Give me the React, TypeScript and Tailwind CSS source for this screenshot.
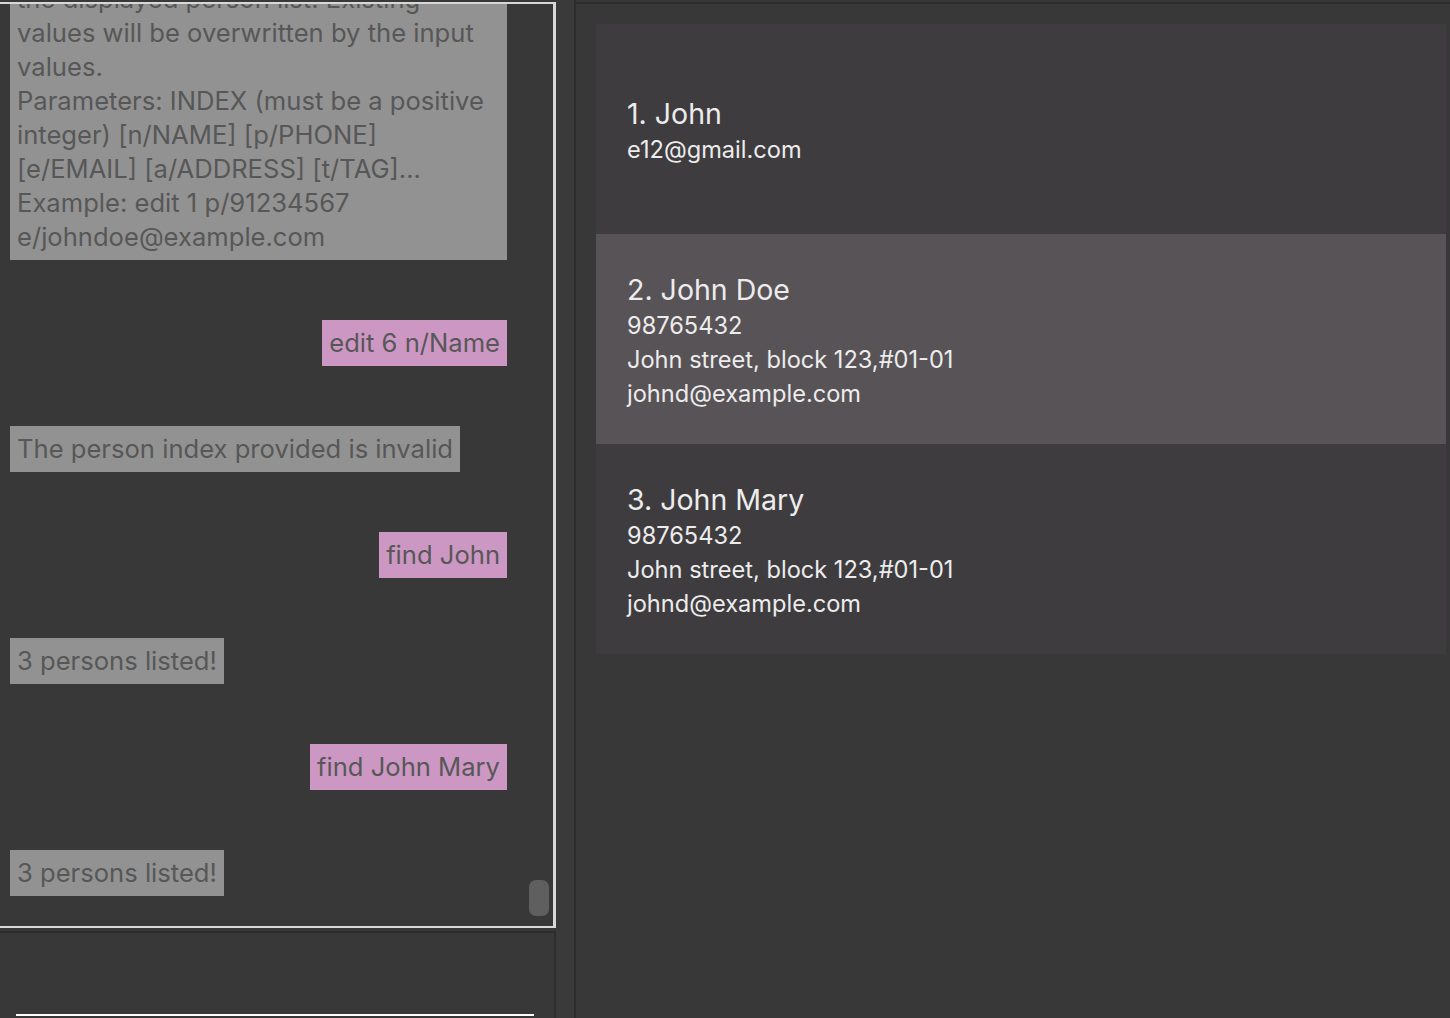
const bubbleText = "text-[#575757] text-[25.6px] leading-[34px]";

interface Message {
    lines: string[];
    fromUser: boolean;
    wide?: boolean;
}

const messages: Message[] = [
    {
        fromUser: false,
        wide: true,
        lines: [
            "edit: Edits the details of the person",
            "identified by the index number used in",
            "the displayed person list. Existing",
            "values will be overwritten by the input",
            "values.",
            "Parameters: INDEX (must be a positive",
            "integer) [n/NAME] [p/PHONE]",
            "[e/EMAIL] [a/ADDRESS] [t/TAG]...",
            "Example: edit 1 p/91234567",
            "e/johndoe@example.com",
        ],
    },
    { fromUser: true, lines: ["edit 6 n/Name"] },
    { fromUser: false, lines: ["The person index provided is invalid"] },
    { fromUser: true, lines: ["find John"] },
    { fromUser: false, lines: ["3 persons listed!"] },
    { fromUser: true, lines: ["find John Mary"] },
    { fromUser: false, lines: ["3 persons listed!"] },
];

interface Person {
    name: string;
    details: string[];
    selected?: boolean;
}

const persons: Person[] = [
    { name: "1. John", details: ["e12@gmail.com"] },
    {
        name: "2. John Doe",
        details: ["98765432", "John street, block 123,#01-01", "johnd@example.com"],
        selected: true,
    },
    {
        name: "3. John Mary",
        details: ["98765432", "John street, block 123,#01-01", "johnd@example.com"],
    },
];

function Bubble({ message }: { message: Message }) {
    return (
        <div className={message.fromUser ? "flex justify-end" : "flex justify-start"}>
            <div
                className={`px-[7px] py-[6px] whitespace-nowrap overflow-hidden ${bubbleText} ${
                    message.fromUser ? "bg-[#cc98c3]" : "bg-[#929292]"
                } ${message.wide ? "w-full" : ""}`}
            >
                {message.lines.map((line, i) => (
                    <div key={i}>{line}</div>
                ))}
            </div>
        </div>
    );
}

function PersonCard({ person }: { person: Person }) {
    return (
        <div
            className={`h-[210px] flex flex-col justify-center pl-[31px] pt-[3px] text-[#ececec] ${
                person.selected ? "bg-[#585357]" : "bg-[#3e3c3f]"
            }`}
        >
            <div className="text-[28.5px] leading-[38px]">{person.name}</div>
            {person.details.map((d, i) => (
                <div key={i} className="text-[23.6px] leading-[34px]">
                    {d}
                </div>
            ))}
        </div>
    );
}

export default function App() {
    return (
        <div
            className="flex w-[1450px] h-[1018px] overflow-hidden bg-[#383838]"
            style={{ fontFamily: "Inter, 'Noto Sans', sans-serif" }}
        >
            {/* chat column */}
            <div className="w-[556px] flex flex-col pt-[2px]">
                <div className="relative h-[926px] overflow-hidden border-t-2 border-r-[3px] border-b-2 border-[#d8d8d8] flex flex-col justify-end gap-[60px] pl-[10px] pr-[46px] pb-[30px]">
                    {messages.map((m, i) => (
                        <Bubble key={i} message={m} />
                    ))}
                    <div className="absolute right-[4px] bottom-[10px] w-[20px] h-[36px] rounded-[7px] bg-[#5f5f5f]" />
                </div>
                <div className="mt-[3px] h-[2px] bg-[#2d2d2d]" />
                <div className="flex-1 flex flex-col justify-end pl-[16px] pr-[20px] pb-[2px] border-r-2 border-[#2d2d2d]">
                    <input
                        className="w-full h-[40px] bg-transparent border-b-2 border-white outline-none text-white text-[25px]"
                        defaultValue=""
                    />
                </div>
            </div>

            {/* divider */}
            <div className="w-[20px] bg-[#3a3a3a] border-r-2 border-[#2d2d2d]" />

            {/* person list */}
            <div className="flex-1 pt-[2px]">
                <div className="h-full border-t-2 border-[#2d2d2d] pl-[20px] pt-[20px] pr-[4px]">
                    <div className="flex flex-col">
                        {persons.map((p, i) => (
                            <PersonCard key={i} person={p} />
                        ))}
                    </div>
                </div>
            </div>
        </div>
    );
}
